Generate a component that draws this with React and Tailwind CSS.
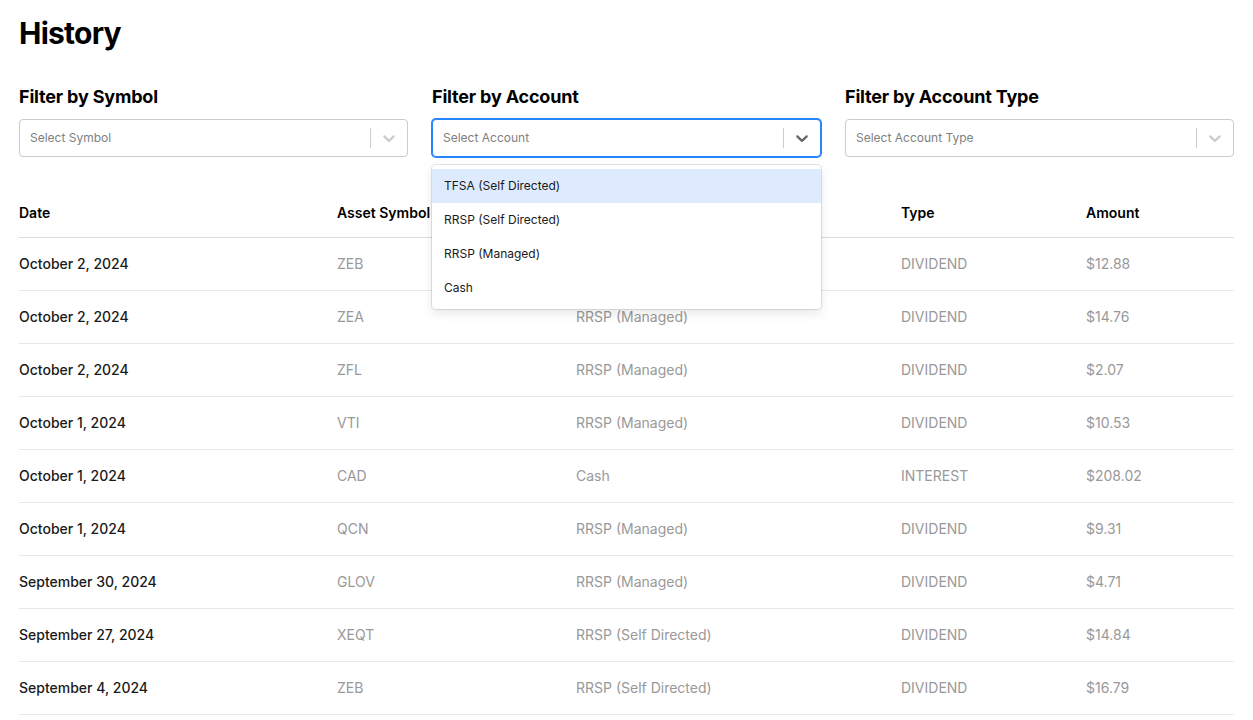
/**
 * App.jsx — Transaction history with filter selects and table.
 */

const ROWS = [
  { date: 'October 2, 2024',    symbol: 'ZEB',  account: 'RRSP (Self Directed)', type: 'DIVIDEND', amount: '$12.88' },
  { date: 'October 2, 2024',    symbol: 'ZEA',  account: 'RRSP (Managed)',       type: 'DIVIDEND', amount: '$14.76' },
  { date: 'October 2, 2024',    symbol: 'ZFL',  account: 'RRSP (Managed)',       type: 'DIVIDEND', amount: '$2.07' },
  { date: 'October 1, 2024',    symbol: 'VTI',  account: 'RRSP (Managed)',       type: 'DIVIDEND', amount: '$10.53' },
  { date: 'October 1, 2024',    symbol: 'CAD',  account: 'Cash',                 type: 'INTEREST', amount: '$208.02' },
  { date: 'October 1, 2024',    symbol: 'QCN',  account: 'RRSP (Managed)',       type: 'DIVIDEND', amount: '$9.31' },
  { date: 'September 30, 2024', symbol: 'GLOV', account: 'RRSP (Managed)',       type: 'DIVIDEND', amount: '$4.71' },
  { date: 'September 27, 2024', symbol: 'XEQT', account: 'RRSP (Self Directed)', type: 'DIVIDEND', amount: '$14.84' },
  { date: 'September 4, 2024',  symbol: 'ZEB',  account: 'RRSP (Self Directed)', type: 'DIVIDEND', amount: '$16.79' },
]

const ACCOUNTS = ['TFSA (Self Directed)', 'RRSP (Self Directed)', 'RRSP (Managed)', 'Cash']

function Chevron({ className }) {
  return (
    <svg viewBox="0 0 20 20" width="20" height="20" className={className} fill="currentColor">
      <path d="M4.516 7.548c0.436-0.446 1.043-0.481 1.576 0l3.908 3.747 3.908-3.747c0.533-0.481 1.141-0.446 1.574 0 0.436 0.445 0.408 1.197 0 1.615-0.406 0.418-4.695 4.502-4.695 4.502-0.217 0.223-0.502 0.335-0.787 0.335s-0.57-0.112-0.789-0.335c0 0-4.287-4.084-4.695-4.502s-0.436-1.17 0-1.615z" />
    </svg>
  )
}

function Select({ label, placeholder, open, options = [] }) {
  return (
    <div className="flex flex-col">
      <h2 className="text-lg font-bold leading-7 tracking-[-0.01em] text-black mb-2">{label}</h2>
      <div className="relative">
        <div
          className={`flex items-center h-[38px] rounded bg-white border ${
            open ? 'border-[#2684FF] shadow-[0_0_0_1px_#2684FF]' : 'border-[#cccccc]'
          }`}
        >
          <div className="flex-1 px-[10px] text-xs text-[#808080]">{placeholder}</div>
          <span className="w-px self-stretch my-2 bg-[#cccccc]" />
          <div className={`p-2 ${open ? 'text-[#666666]' : 'text-[#cccccc]'}`}>
            <Chevron />
          </div>
        </div>

        {open && (
          <div className="absolute left-0 right-0 top-full mt-2 z-10 bg-white rounded py-1 shadow-[0_0_0_1px_rgba(0,0,0,0.1),0_4px_11px_rgba(0,0,0,0.1)]">
            {options.map((o, i) => (
              <div
                key={o}
                className={`h-[34px] flex items-center px-3 text-xs text-[#1a1a1a] ${i === 0 ? 'bg-[#DEEBFF]' : ''}`}
              >
                {o}
              </div>
            ))}
          </div>
        )}
      </div>
    </div>
  )
}

export default function App() {
  return (
    <div className="min-h-screen bg-white px-[19px] pt-[15px] font-['Inter','Liberation_Sans',sans-serif] text-black">
      <h1 className="text-3xl font-bold leading-9 tracking-tight">History</h1>

      {/* Filters */}
      <div className="grid grid-cols-3 gap-6 mt-8">
        <Select label="Filter by Symbol" placeholder="Select Symbol" />
        <Select label="Filter by Account" placeholder="Select Account" open options={ACCOUNTS} />
        <Select label="Filter by Account Type" placeholder="Select Account Type" />
      </div>

      {/* Table */}
      <table className="w-full table-fixed mt-8 text-sm">
        <colgroup>
          <col className="w-[318px]" />
          <col className="w-[239px]" />
          <col className="w-[325px]" />
          <col className="w-[185px]" />
          <col />
        </colgroup>
        <thead>
          <tr className="h-[48px] border-b border-[#dddddd] text-left">
            <th className="font-semibold">Date</th>
            <th className="font-semibold">Asset Symbol</th>
            <th className="font-semibold">Account</th>
            <th className="font-semibold">Type</th>
            <th className="font-semibold">Amount</th>
          </tr>
        </thead>
        <tbody>
          {ROWS.map((r, i) => (
            <tr key={i} className="h-[53px] border-b border-[#e8e8e8]">
              <td className="font-medium text-[#1a1a1a]">{r.date}</td>
              <td className="text-[#999999]">{r.symbol}</td>
              <td className="text-[#999999]">{r.account}</td>
              <td className="text-[#999999]">{r.type}</td>
              <td className="text-[#999999]">{r.amount}</td>
            </tr>
          ))}
        </tbody>
      </table>
    </div>
  )
}
